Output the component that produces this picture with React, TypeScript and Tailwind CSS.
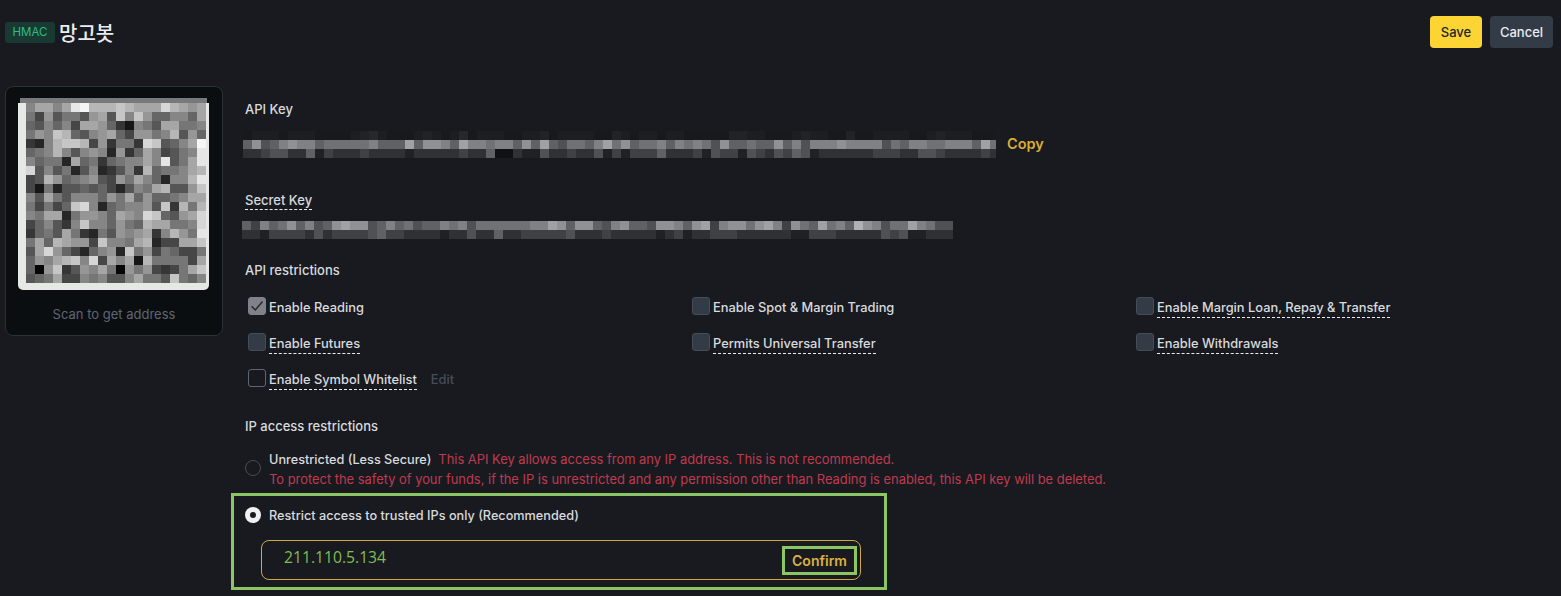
import React from "react";

const QR = [
  "8aa8aefbbbcbaaadba9a",
  "74957759a5c8c966886a",
  "658684aa9631875aa778",
  "798cb6589a649978b596",
  "328bccb493773dc568af",
  "678b858982936a84578e",
  "86772a6736788a8e57ae",
  "d585725823583b6778ab",
  "45b967895497a86288be",
  "41725565642587ab559c",
  "85a75888697a696678aa",
  "74746cd82678895c3b7b",
  "87aa279986a98dc659ad",
  "468538c886976baa778d",
  "3675a73275989a38b97e",
  "7a6ba994c887ab244aac",
  "5ad96426892c79476447",
  "698abc8d4a8a1b77774a",
  "609c3598a709794347ac",
  "567a44878558a775c768",
];

const API_TOP = "011101110000123100012101301110011201111002101101100000221100012110020011110012111000";
const API_MID = "695689886777778666a69986a88788696a657768a7".slice(0, 42) + "96778687875966766968588898888576887788 86a7".replace(/ /g, "");
const API_BOT = "33455336243334333323333343361132253343352 43".replace(/ /g, "").slice(0, 42) + "244463334254425435465233333344433554333343";
const SEC_MID = "64867968569a9956867566878577777788a9699658" + "966599869a489979a84976a786b98577a8755";
const SEC_BOT = "33244443534444564433332335336334444453334 3".replace(/ /g, "") + "33332342334443333332244433333545223333";

function gray(v: number) {
  return `rgb(${v},${v + 1},${v + 4})`;
}

function Strip({ data, count, faint }: { data: string; count: number; faint?: boolean }) {
  return (
    <div className="flex h-[9px]">
      {Array.from({ length: count }).map((_, i) => {
        const d = parseInt(data[i] ?? "3", 16);
        return (
          <div
            key={i}
            className="h-full w-[9px] shrink-0"
            style={{ backgroundColor: faint ? gray(24 + d * 5) : gray(d * 16) }}
          />
        );
      })}
    </div>
  );
}

function Check({ label, state = "fill", dashed = true, extra }: { label: string; state?: "on" | "fill" | "empty"; dashed?: boolean; extra?: string }) {
  return (
    <div className="flex h-[36px] items-start pt-[10px]">
      <div
        className={
          "mr-[3px] flex h-[18px] w-[18px] shrink-0 items-center justify-center rounded-[3px] border " +
          (state === "on"
            ? "border-[#7f8288] bg-[#7f8288]"
            : state === "fill"
            ? "border-[#474d57] bg-[#333b47]"
            : "border-[#5e6673] bg-transparent")
        }
      >
        {state === "on" && (
          <svg viewBox="0 0 16 16" className="h-[16px] w-[16px]" fill="none">
            <path d="M2.5 8.2 6.3 12 13.5 3.5" stroke="#24262b" strokeWidth="1.4" />
          </svg>
        )}
      </div>
      <span
        className={
          "mt-[2px] h-[19px] text-[12.85px] font-medium leading-[18px] text-[#d8dade] " +
          (dashed ? "border-b border-dashed border-[#eaecef]" : "")
        }
      >
        {label}
      </span>
      {extra && <span className="ml-[14px] mt-[2px] text-[12.85px] font-medium leading-[18px] text-[#474d57]">{extra}</span>}
    </div>
  );
}

export default function App() {
  return (
    <div
      className="h-[596px] w-[1561px] overflow-hidden bg-[#181a20] text-[#eaecef]"
      style={{ fontFamily: 'Inter, "Noto Sans CJK KR", sans-serif' }}
    >
      <header className="flex h-[64px] items-start justify-between pl-[5px] pr-[8px] pt-[16px]">
        <div className="flex items-center pt-[6px]">
          <span className="flex h-[21px] w-[50px] items-center justify-center rounded-[3px] bg-[#193a32] pt-[1px] text-[11.5px] font-normal text-[#2ebd85]">
            HMAC
          </span>
          <span
            className="ml-[4px] text-[20px] font-medium leading-[21px] text-[#eaecef]"
            style={{ fontFamily: '"Noto Sans CJK KR", sans-serif' }}
          >
            망고봇
          </span>
        </div>
        <div className="flex gap-[8px]">
          <button className="h-[32px] w-[52px] rounded-[4px] bg-[#fcd535] pt-[2px] text-[13px] font-medium text-[#202630]">Save</button>
          <button className="h-[32px] w-[63px] rounded-[4px] bg-[#333b47] pt-[2px] text-[13px] font-medium text-[#eaecef]">Cancel</button>
        </div>
      </header>

      <div className="flex pl-[5px]">
        <aside className="mt-[22px] h-[250px] w-[218px] shrink-0 rounded-[8px] border border-[#2b3139] bg-[#0b0e11] pl-[12px] pt-[11px]">
          <div className="w-[191px]">
            <div className="mx-[2px] h-[5px] bg-[#77797b]" />
            <div className="rounded-b-[5px] bg-[#e6e8e6] pb-[7px] pl-[8px] pr-[2px]">
              <div className="grid w-[180px] grid-cols-[repeat(20,9px)]">
                {QR.flatMap((row, y) =>
                  row.split("").slice(0, 20).map((c, x) => {
                    const v = parseInt(c, 16) * 16 + 6;
                    return <div key={`${x}-${y}`} className="h-[9px]" style={{ backgroundColor: `rgb(${v},${v},${v})` }} />;
                  })
                )}
              </div>
            </div>
          </div>
          <p className="mt-[15px] pr-[12px] text-center text-[13px] leading-[18px] text-[#5e6673]">Scan to get address</p>
        </aside>

        <main className="ml-[8px] flex-1">
          <div className="px-[14px]">
            <div className="mt-[36px] h-[18px] text-[13px] font-medium leading-[18px] text-[#d8dade]">API Key</div>
            <div className="ml-[-2px] mt-[13px] flex items-center">
              <div className="w-[753px] overflow-hidden">
                <Strip data={API_TOP} count={84} faint />
                <Strip data={API_MID} count={84} />
                <Strip data={API_BOT} count={84} />
              </div>
              <span className="-mt-[2px] ml-[11px] text-[14.5px] font-semibold leading-[20px] text-[#dbae30]">Copy</span>
            </div>

            <div className="mt-[33px] flex">
              <span className="h-[19px] border-b border-dashed border-[#eaecef] text-[13px] font-medium leading-[18px] text-[#d8dade]">Secret Key</span>
            </div>
            <div className="ml-[-3px] mt-[11px]">
              <Strip data={SEC_MID} count={79} />
              <Strip data={SEC_BOT} count={79} />
            </div>

            <div className="mt-[22px] h-[18px] text-[13px] font-medium leading-[18px] text-[#d8dade]">API restrictions</div>
            <div className="mt-[8px] grid grid-cols-[444px_444px_1fr] pl-[3px]">
              <Check label="Enable Reading" state="on" dashed={false} />
              <Check label="Enable Spot & Margin Trading" dashed={false} />
              <Check label="Enable Margin Loan, Repay & Transfer" />
              <Check label="Enable Futures" />
              <Check label="Permits Universal Transfer" />
              <Check label="Enable Withdrawals" />
              <Check label="Enable Symbol Whitelist" state="empty" extra="Edit" />
            </div>

            <div className="mt-[22px] h-[18px] text-[13px] font-medium leading-[18px] text-[#d8dade]">IP access restrictions</div>
            <div className="mt-[15px] flex h-[43px]">
              <div className="mr-[8px] mt-[10px] h-[16px] w-[16px] shrink-0 rounded-full border border-[#474d57]" />
              <div className="text-[12.9px] leading-[20px] text-[#bf3a4e]">
                <div>
                  <span className="mr-[7px] text-[12.7px] font-medium text-[#d8dade]">Unrestricted (Less Secure)</span>
                  This API Key allows access from any IP address. This is not recommended.
                </div>
                <div>To protect the safety of your funds, if the IP is unrestricted and any permission other than Reading is enabled, this API key will be deleted.</div>
              </div>
            </div>
          </div>

          <section className="h-[97px] w-[656px] border-[3px] border-[#8cc564] pl-[11px] pt-[10px]">
            <div className="flex h-[20px] items-center">
              <div className="-mt-[2px] mr-[8px] flex h-[16px] w-[16px] items-center justify-center rounded-full bg-[#f0f1f2]">
                <div className="h-[6px] w-[6px] rounded-full bg-[#181a20]" />
              </div>
              <span className="text-[12.7px] font-medium text-[#d8dade]">Restrict access to trusted IPs only (Recommended)</span>
            </div>
            <div className="ml-[16px] mt-[14px] flex h-[40px] w-[600px] items-center justify-between rounded-[8px] border border-[#cfa846] pl-[22px] pr-[3px]">
              <span className="-mt-[4px] text-[15.7px] text-[#82bd50]" style={{ fontFamily: '"Open Sans", sans-serif' }}>211.110.5.134</span>
              <span className="flex h-[29px] w-[75px] items-center justify-center border-[3px] border-[#8cc564] text-[14px] font-semibold text-[#dcb13f]">Confirm</span>
            </div>
          </section>
        </main>
      </div>
    </div>
  );
}
